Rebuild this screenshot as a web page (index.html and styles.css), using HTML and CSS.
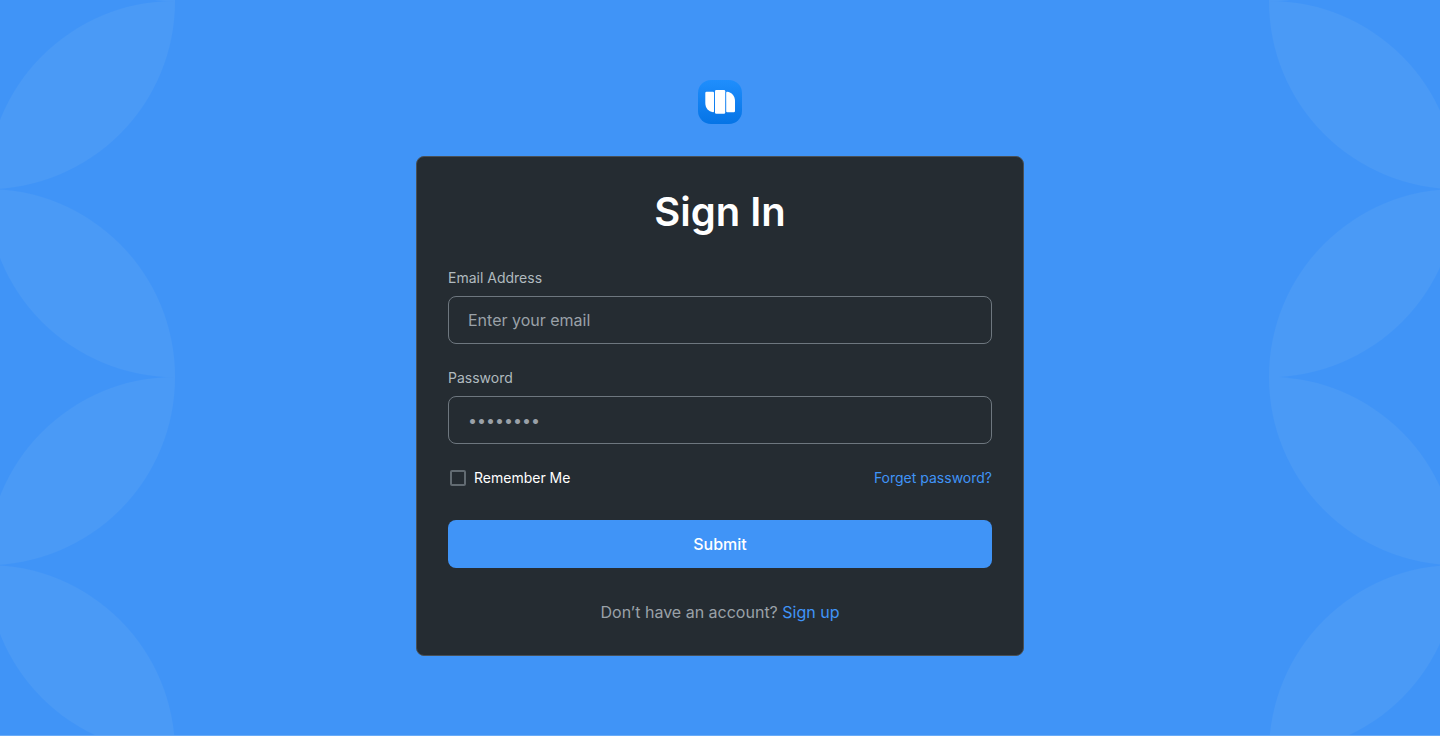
FILE: index.html
```html
<!DOCTYPE html>
<html lang="en">
<head>
<meta charset="utf-8">
<meta name="viewport" content="width=device-width, initial-scale=1">
<title>Sign In</title>
<link rel="stylesheet" href="styles.css">
</head>
<body>
<div class="page">
  <svg class="leaves leaves-left" aria-hidden="true">
    <defs>
      <pattern id="leaf" width="188" height="376" patternUnits="userSpaceOnUse" patternTransform="translate(-13 1)">
        <path class="leaf" d="M188 0A188 188 0 0 0 0 188A188 188 0 0 0 188 0ZM0 188A188 188 0 0 1 188 376A188 188 0 0 1 0 188Z"/>
      </pattern>
    </defs>
    <rect width="100%" height="100%" fill="url(#leaf)"/>
  </svg>
  <svg class="leaves leaves-right" aria-hidden="true">
    <rect width="100%" height="100%" fill="url(#leaf)"/>
  </svg>

  <main class="content">
    <svg class="logo" viewBox="0 0 44 44" role="img" aria-label="Logo">
      <defs>
        <linearGradient id="logo-bg" x1="0" y1="0" x2="0" y2="1">
          <stop offset="0" stop-color="#1f8efd"/>
          <stop offset="1" stop-color="#0574e6"/>
        </linearGradient>
      </defs>
      <rect width="44" height="44" rx="13" fill="url(#logo-bg)"/>
      <path fill="#fff" d="M8.500 11.800H15Q16 11.800 16 12.800V31.200Q16 32.300 15 32.200C10.500 31.600 7.300 28 7.300 23V13Q7.300 11.800 8.500 11.800Z"/>
      <rect x="17" y="10" width="10.200" height="23.800" rx="1.200" fill="#fff"/>
      <path fill="#fff" d="M29.200 11.800C33.700 12.400 37 16 37 21V31Q37 32.200 35.800 32.200H29.200Q28.200 32.200 28.200 31.200V12.800Q28.200 11.700 29.200 11.800Z"/>
    </svg>

    <form class="card">
      <h1 class="title">Sign In</h1>

      <div class="field">
        <label class="label" for="email">Email Address</label>
        <input class="input" id="email" type="email" placeholder="Enter your email">
      </div>

      <div class="field">
        <label class="label" for="password">Password</label>
        <input class="input" id="password" type="password" placeholder="••••••••">
      </div>

      <div class="options">
        <label class="remember" for="remember"><input class="checkbox" id="remember" type="checkbox">Remember Me</label>
        <a class="link" href="#forgot">Forget password?</a>
      </div>

      <button class="submit" type="submit">Submit</button>

      <p class="signup">Don’t have an account? <a class="link" href="#signup">Sign up</a></p>
    </form>
  </main>
</div>
</body>
</html>
```

FILE: styles.css
```css
*, *::before, *::after {
  box-sizing: border-box;
}

body {
  margin: 0;
  background: #4094f7;
  color: #fff;
  font-family: Inter, "Liberation Sans", sans-serif;
  font-size: 16px;
  line-height: 24px;
}

.page {
  position: relative;
  min-height: 100vh;
  padding: 80px 16px 79px;
  border-bottom: 1px solid #68abf8;
  overflow: hidden;
}

.leaves {
  position: absolute;
  top: 0;
  width: 175px;
  height: 100%;
}

.leaves-left {
  left: 0;
}

.leaves-right {
  right: -4px;
  transform: scaleX(-1);
}

.leaf {
  fill: #4a9af6;
}

.content {
  position: relative;
  display: flex;
  flex-direction: column;
  align-items: center;
  gap: 32px;
}

.logo {
  width: 44px;
  height: 44px;
}

.card {
  display: flex;
  flex-direction: column;
  gap: 24px;
  width: 100%;
  max-width: 608px;
  padding: 31px;
  border: 1px solid #485057;
  border-radius: 8px;
  background: #252c32;
}

.title {
  margin: 0 0 8px;
  font-size: 40px;
  font-weight: 600;
  line-height: 48px;
  text-align: center;
}

.field {
  display: flex;
  flex-direction: column;
  gap: 8px;
}

.label {
  color: #b0babf;
  font-size: 14px;
  line-height: 20px;
}

.input {
  width: 100%;
  height: 48px;
  padding: 0 19px;
  border: 1px solid #6e777f;
  border-radius: 8px;
  background: transparent;
  color: #fff;
  font: inherit;
}

.input::placeholder {
  color: #9aa1a8;
  opacity: 1;
}

.options {
  display: flex;
  align-items: center;
  justify-content: space-between;
  font-size: 14px;
  line-height: 20px;
}

.remember {
  display: flex;
  align-items: center;
  gap: 8px;
  padding-left: 2px;
}

.checkbox {
  appearance: none;
  width: 16px;
  height: 16px;
  margin: 0;
  border: 2px solid #626b72;
  border-radius: 2px;
}

.checkbox:checked {
  background: #4094f7;
}

.link {
  color: #4094f7;
  text-decoration: none;
}

.submit {
  height: 48px;
  margin: 8px 0;
  border: 0;
  border-radius: 8px;
  background: #4094f7;
  color: #fff;
  font: inherit;
  font-weight: 500;
}

.signup {
  margin: 0;
  color: #9aa1a8;
  text-align: center;
}
```
